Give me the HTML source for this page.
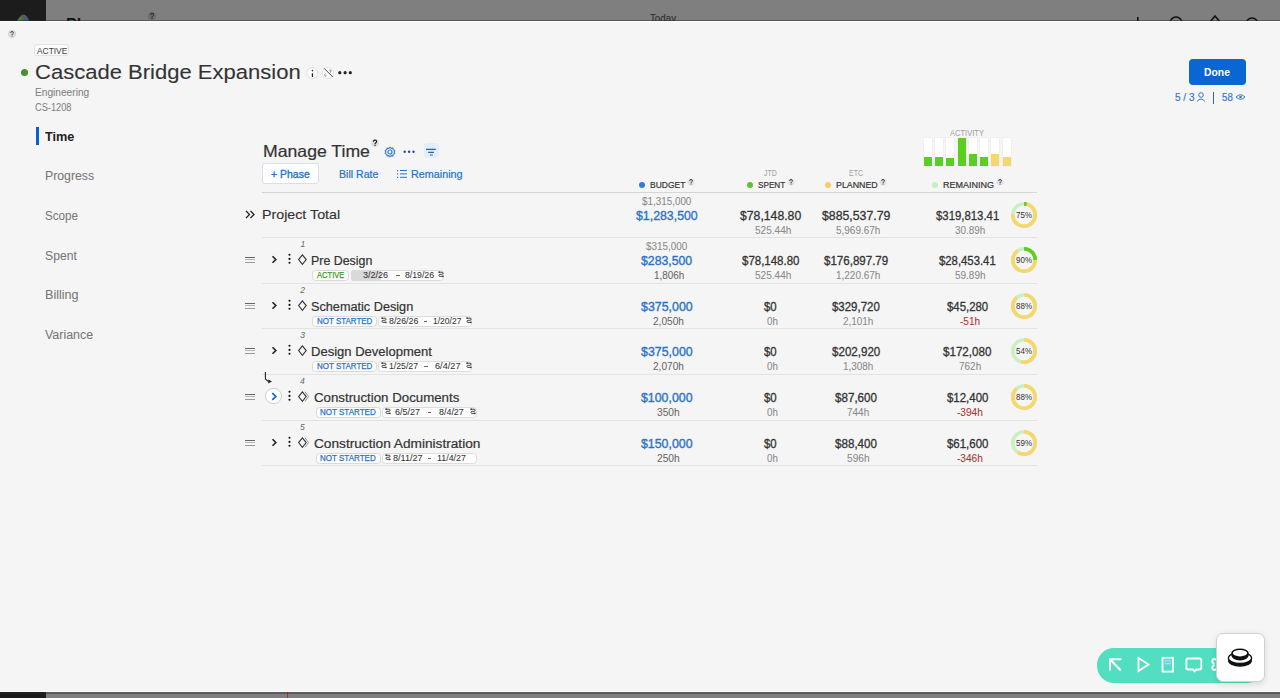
<!DOCTYPE html>
<html><head><meta charset="utf-8"><title>Manage Time</title>
<style>
html,body{margin:0;padding:0;}
body{width:1280px;height:698px;position:relative;overflow:hidden;background:#7f7f7f;font-family:"Liberation Sans",sans-serif;}
.t{position:absolute;white-space:nowrap;line-height:1;transform-origin:0 0;-webkit-text-stroke:0.2px currentColor;}
svg{overflow:visible}
</style></head><body>
<div style="position:absolute;left:0px;top:0px;width:46px;height:21px;background:#1c1c1c"></div><div style="position:absolute;left:46px;top:0px;width:1234px;height:21px;background:#7f7f7f"></div><div style="position:absolute;left:0px;top:692px;width:46px;height:6px;background:#1c1c1c"></div><div style="position:absolute;left:46px;top:692px;width:1234px;height:6px;background:#7f7f7f"></div><div style="position:absolute;left:287px;top:692px;width:1px;height:6px;background:#a33"></div><svg style="position:absolute;left:16px;top:13px;" width="14" height="8" viewBox="0 0 14 8"><path d="M1 8 Q5 0.5 7.5 1.5 Q10 0.5 13.5 8 Z" fill="#5a5a5a"/><path d="M1 8 Q3 4 6 4.5 L6 8Z" fill="#3f8a2a"/><path d="M8.5 5 Q11.5 5 13.5 8 H8.5Z" fill="#2a5f9a"/></svg><div class="t" style="left:66.00px;top:17.46px;font-size:16px;color:#111;-webkit-text-stroke:0px currentColor;font-weight:bold;">Pl</div><svg style="position:absolute;left:146px;top:10px;" width="12" height="12" viewBox="0 0 12 12"><circle cx="6" cy="6" r="4" fill="#6e6e6e"/><g transform="translate(6 6) scale(0.95)"><path d="M-1.55 -1.2 Q-1.55 -2.9 0.05 -2.9 Q1.65 -2.9 1.65 -1.45 Q1.65 -0.55 0.6 0.05 Q0.05 0.4 0.05 1.2" fill="none" stroke="#1a1a1a" stroke-width="1.05"/><circle cx="0.05" cy="2.45" r="0.62" fill="#1a1a1a"/></g></svg><div class="t" style="left:650.00px;top:14.04px;font-size:10px;color:#333;transform:scaleX(0.9745);">Today</div><svg style="position:absolute;left:1130px;top:14px;" width="130" height="7" viewBox="0 0 130 7"><rect x="7" y="3" width="1.6" height="5" fill="#111"/><circle cx="46" cy="9" r="6" fill="none" stroke="#111" stroke-width="1.5"/><path d="M80 8 L85 2 L90 8" fill="none" stroke="#111" stroke-width="1.5"/><circle cx="122" cy="10" r="6" fill="none" stroke="#111" stroke-width="1.5"/></svg><div style="position:absolute;left:0px;top:21px;width:1280px;height:671px;background:#f5f5f5"></div><div style="position:absolute;left:0px;top:20px;width:1280px;height:1px;background:rgba(40,40,40,0.45)"></div><div style="position:absolute;left:0px;top:21px;width:1280px;height:1px;background:#fdfdfd"></div><div style="position:absolute;left:0px;top:691px;width:1280px;height:1px;background:#fcfcfc"></div><div style="position:absolute;left:0px;top:692px;width:1280px;height:1.5px;background:rgba(40,40,40,0.4)"></div><svg style="position:absolute;left:6px;top:28px;" width="12" height="12" viewBox="0 0 12 12"><circle cx="6" cy="6" r="4.2" fill="#dadada"/><g transform="translate(6 6) scale(0.85)"><path d="M-1.55 -1.2 Q-1.55 -2.9 0.05 -2.9 Q1.65 -2.9 1.65 -1.45 Q1.65 -0.55 0.6 0.05 Q0.05 0.4 0.05 1.2" fill="none" stroke="#333" stroke-width="1.05"/><circle cx="0.05" cy="2.45" r="0.62" fill="#333"/></g></svg><div style="position:absolute;left:34px;top:44px;width:35px;height:12px;background:#fbfbfb;border:1px solid #e2e2e2;border-radius:3px;box-sizing:border-box"></div><div class="t" style="left:37.00px;top:46.55px;font-size:8.8px;color:#444;-webkit-text-stroke:0.05px currentColor;transform:scaleX(0.9533);">ACTIVE</div><div style="position:absolute;left:21px;top:69px;width:7px;height:7px;background:#4b8f2f;border-radius:50%"></div><div class="t" style="left:35.40px;top:61.55px;font-size:20.5px;color:#333;-webkit-text-stroke:0.1px currentColor;transform:scaleX(1.0744);">Cascade Bridge Expansion</div><svg style="position:absolute;left:306px;top:67px;" width="13" height="13" viewBox="0 0 13 13"><circle cx="6.4" cy="6" r="5.6" fill="#fbfbfb" stroke="#dcdcdc" stroke-width="0.9"/><rect x="5.8" y="6.3" width="1.3" height="3.7" fill="#222"/><circle cx="6.45" cy="3.6" r="0.8" fill="#222"/></svg><svg style="position:absolute;left:322px;top:67px;" width="13" height="13" viewBox="0 0 13 13"><circle cx="5.9" cy="6.1" r="5.6" fill="#fbfbfb" stroke="#e0e0e0" stroke-width="0.9"/><path d="M2.2 1.4 L10.9 10.1" stroke="#333" stroke-width="0.9"/><path d="M7.2 3.2 Q8.6 2.4 9 3.8 Q9.2 5 8 5.6 M4.6 8.8 Q3.4 9.8 2.8 8.6 Q2.4 7.4 3.6 6.6" fill="none" stroke="#777" stroke-width="0.9"/></svg><svg style="position:absolute;left:337px;top:70px;" width="16" height="6" viewBox="0 0 16 6"><circle cx="2.8" cy="2.7" r="1.6" fill="#222"/><circle cx="8.1" cy="2.7" r="1.6" fill="#222"/><circle cx="13.3" cy="2.7" r="1.6" fill="#222"/></svg><div class="t" style="left:34.90px;top:87.94px;font-size:10px;color:#808080;-webkit-text-stroke:0.05px currentColor;transform:scaleX(1.0156);">Engineering</div><div class="t" style="left:34.90px;top:102.63px;font-size:10px;color:#808080;-webkit-text-stroke:0.05px currentColor;transform:scaleX(0.9248);">CS-1208</div><div style="position:absolute;left:1189px;top:59px;width:57px;height:26px;background:#0a66d2;border-radius:4px"></div><div class="t" style="left:1204.30px;top:66.59px;font-size:11px;color:#fff;-webkit-text-stroke:0px currentColor;font-weight:bold;transform:scaleX(0.9418);">Done</div><div class="t" style="left:1175.20px;top:91.91px;font-size:10.5px;color:#3a78c8;transform:scaleX(0.9543);">5 / 3</div><svg style="position:absolute;left:1196px;top:92px;" width="10" height="10" viewBox="0 0 10 10"><circle cx="5" cy="3" r="2.3" fill="none" stroke="#3a78c8" stroke-width="1"/><path d="M1 9.5 Q5 4.5 9 9.5" fill="none" stroke="#3a78c8" stroke-width="1"/></svg><div style="position:absolute;left:1213px;top:92px;width:1.3px;height:12px;background:#2a68b8"></div><div class="t" style="left:1222.40px;top:91.91px;font-size:10.5px;color:#3a78c8;transform:scaleX(0.9250);">58</div><svg style="position:absolute;left:1235px;top:93px;" width="11" height="8" viewBox="0 0 11 8"><path d="M1 4 Q5.5 -0.5 10 4 Q5.5 8.5 1 4Z" fill="none" stroke="#3a78c8" stroke-width="1"/><circle cx="5.5" cy="4" r="1.3" fill="#3a78c8"/></svg><div style="position:absolute;left:36px;top:127px;width:3px;height:18px;background:#0a5fcc"></div><div class="t" style="left:44.50px;top:131.22px;font-size:12.5px;color:#222;-webkit-text-stroke:0px currentColor;font-weight:bold;transform:scaleX(1.0155);">Time</div><div class="t" style="left:45.40px;top:170.44px;font-size:12px;color:#777;-webkit-text-stroke:0.05px currentColor;transform:scaleX(1.0224);">Progress</div><div class="t" style="left:45.40px;top:210.04px;font-size:12px;color:#777;-webkit-text-stroke:0.05px currentColor;transform:scaleX(0.9700);">Scope</div><div class="t" style="left:45.40px;top:249.54px;font-size:12px;color:#777;-webkit-text-stroke:0.05px currentColor;transform:scaleX(1.0173);">Spent</div><div class="t" style="left:45.40px;top:289.04px;font-size:12px;color:#777;-webkit-text-stroke:0.05px currentColor;transform:scaleX(1.0495);">Billing</div><div class="t" style="left:45.40px;top:328.54px;font-size:12px;color:#777;-webkit-text-stroke:0.05px currentColor;transform:scaleX(1.0349);">Variance</div><div class="t" style="left:262.50px;top:142.73px;font-size:16.5px;color:#333;transform:scaleX(1.0693);">Manage Time</div><svg style="position:absolute;left:369.4px;top:137.2px;" width="12" height="12" viewBox="0 0 12 12"><circle cx="6" cy="6" r="4" fill="#dedede"/><g transform="translate(6 6) scale(1.0)"><path d="M-1.55 -1.2 Q-1.55 -2.9 0.05 -2.9 Q1.65 -2.9 1.65 -1.45 Q1.65 -0.55 0.6 0.05 Q0.05 0.4 0.05 1.2" fill="none" stroke="#111" stroke-width="1.05"/><circle cx="0.05" cy="2.45" r="0.62" fill="#111"/></g></svg><svg style="position:absolute;left:384px;top:146px;" width="12" height="12" viewBox="0 0 12 12"><circle cx="6" cy="6" r="2" fill="none" stroke="#3a7bd0" stroke-width="1.2"/><path d="M6 1.2 L7.2 2.3 L8.9 2.1 L9.3 3.7 L10.8 4.6 L10.1 6 L10.8 7.4 L9.3 8.3 L8.9 9.9 L7.2 9.7 L6 10.8 L4.8 9.7 L3.1 9.9 L2.7 8.3 L1.2 7.4 L1.9 6 L1.2 4.6 L2.7 3.7 L3.1 2.1 L4.8 2.3Z" fill="none" stroke="#3a7bd0" stroke-width="1.1"/></svg><svg style="position:absolute;left:403px;top:149px;" width="13" height="5" viewBox="0 0 13 5"><circle cx="1.7" cy="2.8" r="1.2" fill="#1a4f98"/><circle cx="6.1" cy="2.8" r="1.2" fill="#1a4f98"/><circle cx="10.5" cy="2.8" r="1.2" fill="#1a4f98"/></svg><div style="position:absolute;left:424px;top:143px;width:15px;height:15px;background:#e2eefa;border-radius:3px"></div><svg style="position:absolute;left:424px;top:143px;" width="15" height="15" viewBox="0 0 15 15"><path d="M2 6.4 H11.8 M4.2 9.4 H9.8 M6 12 H8.8" stroke="#2a5fa8" stroke-width="1.1"/></svg><div style="position:absolute;left:262px;top:163px;width:57px;height:21px;background:#fff;border:1px solid #d9dfe6;border-radius:3px;box-sizing:border-box"></div><div class="t" style="left:271.20px;top:168.69px;font-size:11px;color:#2a6fc2;-webkit-text-stroke:0.35px currentColor;transform:scaleX(0.9516);">+ Phase</div><div class="t" style="left:338.50px;top:168.59px;font-size:11px;color:#2a6fc2;transform:scaleX(0.9618);">Bill Rate</div><svg style="position:absolute;left:396px;top:169px;" width="12" height="10" viewBox="0 0 12 10"><g fill="#2a6fc2"><rect x="1" y="1" width="1.2" height="1.2"/><rect x="1" y="4.4" width="1.2" height="1.2"/><rect x="1" y="7.8" width="1.2" height="1.2"/><rect x="4" y="1" width="7" height="1"/><rect x="4" y="4.4" width="7" height="1"/><rect x="4" y="7.8" width="7" height="1"/></g></svg><div class="t" style="left:411.00px;top:168.69px;font-size:11px;color:#2a6fc2;transform:scaleX(0.9814);">Remaining</div><div style="position:absolute;left:262px;top:192px;width:775px;height:1px;background:#d6d6da"></div><div style="position:absolute;left:638.7px;top:181.6px;width:6px;height:6px;background:#2f7de0;border-radius:50%"></div><div class="t" style="left:649.70px;top:179.86px;font-size:9.5px;color:#333;transform:scaleX(0.8942);">BUDGET</div><svg style="position:absolute;left:684.8px;top:175.5px;" width="12" height="12" viewBox="0 0 12 12"><circle cx="6" cy="6" r="3.6" fill="#e2e2e2"/><g transform="translate(6 6) scale(0.85)"><path d="M-1.55 -1.2 Q-1.55 -2.9 0.05 -2.9 Q1.65 -2.9 1.65 -1.45 Q1.65 -0.55 0.6 0.05 Q0.05 0.4 0.05 1.2" fill="none" stroke="#222" stroke-width="1.05"/><circle cx="0.05" cy="2.45" r="0.62" fill="#222"/></g></svg><div style="position:absolute;left:746.5px;top:181.6px;width:6px;height:6px;background:#5cc62a;border-radius:50%"></div><div class="t" style="left:757.50px;top:179.86px;font-size:9.5px;color:#333;transform:scaleX(0.8588);">SPENT</div><svg style="position:absolute;left:784.7px;top:175.5px;" width="12" height="12" viewBox="0 0 12 12"><circle cx="6" cy="6" r="3.6" fill="#e2e2e2"/><g transform="translate(6 6) scale(0.85)"><path d="M-1.55 -1.2 Q-1.55 -2.9 0.05 -2.9 Q1.65 -2.9 1.65 -1.45 Q1.65 -0.55 0.6 0.05 Q0.05 0.4 0.05 1.2" fill="none" stroke="#222" stroke-width="1.05"/><circle cx="0.05" cy="2.45" r="0.62" fill="#222"/></g></svg><div style="position:absolute;left:824.5px;top:181.6px;width:6px;height:6px;background:#f5cf62;border-radius:50%"></div><div class="t" style="left:835.80px;top:179.86px;font-size:9.5px;color:#333;transform:scaleX(0.9292);">PLANNED</div><svg style="position:absolute;left:877.3px;top:175.5px;" width="12" height="12" viewBox="0 0 12 12"><circle cx="6" cy="6" r="3.6" fill="#e2e2e2"/><g transform="translate(6 6) scale(0.85)"><path d="M-1.55 -1.2 Q-1.55 -2.9 0.05 -2.9 Q1.65 -2.9 1.65 -1.45 Q1.65 -0.55 0.6 0.05 Q0.05 0.4 0.05 1.2" fill="none" stroke="#222" stroke-width="1.05"/><circle cx="0.05" cy="2.45" r="0.62" fill="#222"/></g></svg><div style="position:absolute;left:932px;top:181.6px;width:6px;height:6px;background:#c8efc0;border-radius:50%"></div><div class="t" style="left:943.40px;top:179.86px;font-size:9.5px;color:#333;transform:scaleX(0.9473);">REMAINING</div><svg style="position:absolute;left:994px;top:175.5px;" width="12" height="12" viewBox="0 0 12 12"><circle cx="6" cy="6" r="3.6" fill="#e2e2e2"/><g transform="translate(6 6) scale(0.85)"><path d="M-1.55 -1.2 Q-1.55 -2.9 0.05 -2.9 Q1.65 -2.9 1.65 -1.45 Q1.65 -0.55 0.6 0.05 Q0.05 0.4 0.05 1.2" fill="none" stroke="#222" stroke-width="1.05"/><circle cx="0.05" cy="2.45" r="0.62" fill="#222"/></g></svg><div class="t" style="left:764.00px;top:168.80px;font-size:8.5px;color:#a0a0a0;-webkit-text-stroke:0px currentColor;transform:scaleX(0.8151);">JTD</div><div class="t" style="left:848.60px;top:168.80px;font-size:8.5px;color:#a0a0a0;-webkit-text-stroke:0px currentColor;transform:scaleX(0.8294);">ETC</div><div class="t" style="left:950.20px;top:128.60px;font-size:8.5px;color:#a0a0a0;-webkit-text-stroke:0px currentColor;transform:scaleX(0.8887);">ACTIVITY</div><div style="position:absolute;left:924px;top:138px;width:8px;height:28px;background:#fff;box-shadow:0 0 0 0.5px #ececec"></div><div style="position:absolute;left:924px;top:157px;width:8px;height:9px;background:#5ccf1e"></div><div style="position:absolute;left:935px;top:138px;width:8px;height:28px;background:#fff;box-shadow:0 0 0 0.5px #ececec"></div><div style="position:absolute;left:935px;top:157px;width:8px;height:9px;background:#5ccf1e"></div><div style="position:absolute;left:946px;top:138px;width:8px;height:28px;background:#fff;box-shadow:0 0 0 0.5px #ececec"></div><div style="position:absolute;left:946px;top:158px;width:8px;height:8px;background:#5ccf1e"></div><div style="position:absolute;left:958px;top:138px;width:8px;height:28px;background:#fff;box-shadow:0 0 0 0.5px #ececec"></div><div style="position:absolute;left:958px;top:138px;width:8px;height:28px;background:#5ccf1e"></div><div style="position:absolute;left:969px;top:138px;width:8px;height:28px;background:#fff;box-shadow:0 0 0 0.5px #ececec"></div><div style="position:absolute;left:969px;top:154px;width:8px;height:12px;background:#5ccf1e"></div><div style="position:absolute;left:980px;top:138px;width:8px;height:28px;background:#fff;box-shadow:0 0 0 0.5px #ececec"></div><div style="position:absolute;left:980px;top:157px;width:8px;height:9px;background:#5ccf1e"></div><div style="position:absolute;left:991px;top:138px;width:8px;height:28px;background:#fff;box-shadow:0 0 0 0.5px #ececec"></div><div style="position:absolute;left:991px;top:154px;width:8px;height:12px;background:#f7d66a"></div><div style="position:absolute;left:1003px;top:138px;width:8px;height:28px;background:#fff;box-shadow:0 0 0 0.5px #ececec"></div><div style="position:absolute;left:1003px;top:157px;width:8px;height:9px;background:#f7d66a"></div><div style="position:absolute;left:262px;top:237px;width:775px;height:1px;background:#e3e3e3"></div><div style="position:absolute;left:262px;top:283px;width:775px;height:1px;background:#e3e3e3"></div><div style="position:absolute;left:262px;top:328px;width:775px;height:1px;background:#e3e3e3"></div><div style="position:absolute;left:262px;top:374px;width:775px;height:1px;background:#e3e3e3"></div><div style="position:absolute;left:262px;top:420px;width:775px;height:1px;background:#e3e3e3"></div><div style="position:absolute;left:262px;top:465px;width:775px;height:1px;background:#e3e3e3"></div><svg style="position:absolute;left:245px;top:210px;" width="11" height="9" viewBox="0 0 11 9"><path d="M1 1 L4.5 4.5 L1 8 M5.5 1 L9 4.5 L5.5 8" fill="none" stroke="#222" stroke-width="1.3"/></svg><div class="t" style="left:261.90px;top:208.10px;font-size:13px;color:#333;-webkit-text-stroke:0.12px currentColor;transform:scaleX(1.0955);">Project Total</div><div class="t" style="left:641.83px;top:196.63px;font-size:10px;color:#888;-webkit-text-stroke:0.05px currentColor;transform:scaleX(0.9860);">$1,315,000</div><div class="t" style="left:635.65px;top:209.10px;font-size:13px;color:#2a72c6;-webkit-text-stroke:0.35px currentColor;transform:scaleX(0.9483);">$1,283,500</div><div class="t" style="left:740.00px;top:209.00px;font-size:13px;color:#333;-webkit-text-stroke:0.3px currentColor;transform:scaleX(0.9406);">$78,148.80</div><div class="t" style="left:754.60px;top:225.53px;font-size:10px;color:#888;-webkit-text-stroke:0.05px currentColor;transform:scaleX(1.0069);">525.44h</div><div class="t" style="left:821.60px;top:209.00px;font-size:13px;color:#333;-webkit-text-stroke:0.3px currentColor;transform:scaleX(0.9461);">$885,537.79</div><div class="t" style="left:835.60px;top:225.53px;font-size:10px;color:#888;-webkit-text-stroke:0.05px currentColor;transform:scaleX(0.9980);">5,969.67h</div><div class="t" style="left:935.60px;top:208.80px;font-size:13px;color:#333;-webkit-text-stroke:0.3px currentColor;transform:scaleX(0.8742);">$319,813.41</div><div class="t" style="left:954.80px;top:225.53px;font-size:10px;color:#888;-webkit-text-stroke:0.05px currentColor;transform:scaleX(0.9873);">30.89h</div><svg style="position:absolute;left:1008.7px;top:199.8px;" width="30" height="30" viewBox="0 0 30 30"><circle cx="15" cy="15" r="11.2" fill="none" stroke="#c9f0c0" stroke-width="3.6"/><circle cx="15" cy="15" r="11.2" fill="none" stroke="#f7d66a" stroke-width="3.6" stroke-dasharray="52.78 70.37" transform="rotate(-90 15 15)"/><circle cx="15" cy="15" r="11.2" fill="none" stroke="#5ccf1e" stroke-width="3.6" stroke-dasharray="2.81 70.37" transform="rotate(-90 15 15)"/><text x="15" y="18" font-size="8.6" text-anchor="middle" fill="#333" font-family="Liberation Sans" textLength="16" lengthAdjust="spacingAndGlyphs">75%</text></svg><div class="t" style="left:300.60px;top:239.80px;font-size:8.5px;color:#666;-webkit-text-stroke:0px currentColor;font-style:italic;">1</div><div style="position:absolute;left:245px;top:257px;width:10px;height:1px;background:#666"></div><div style="position:absolute;left:245px;top:259px;width:10px;height:1.3px;background:#b5b5b5"></div><div style="position:absolute;left:245px;top:262px;width:10px;height:1px;background:#999"></div><svg style="position:absolute;left:270px;top:255px;" width="8" height="9" viewBox="0 0 8 9"><path d="M2.5 1.3 L5.8 4.5 L2.5 7.7" fill="none" stroke="#222" stroke-width="1.6"/></svg><svg style="position:absolute;left:287px;top:252px;" width="5" height="12" viewBox="0 0 5 12"><circle cx="2.5" cy="2.8" r="1.05" fill="#111"/><circle cx="2.5" cy="6.9" r="1.05" fill="#111"/><circle cx="2.5" cy="10.8" r="1.05" fill="#111"/></svg><svg style="position:absolute;left:297px;top:254.2px;" width="13" height="12" viewBox="0 0 13 12"><path d="M5.4 0.8 L9.2 5.6 L5.4 10.4 L1.6 5.6Z" fill="none" stroke="#333" stroke-width="1.1"/></svg><div class="t" style="left:311.20px;top:254.72px;font-size:12.5px;color:#333;transform:scaleX(0.9913);">Pre Design</div><div style="position:absolute;left:311.8px;top:269.8px;width:37.2px;height:11px;background:#fdfdfd;border:1px solid #d9d9d9;border-radius:3.5px;box-sizing:border-box"></div><div class="t" style="left:316.75px;top:270.75px;font-size:8.8px;color:#3d9a2a;-webkit-text-stroke:0.25px currentColor;transform:scaleX(0.8605);">ACTIVE</div><div style="position:absolute;left:350.7px;top:269.8px;width:93.5px;height:11px;background:#fdfdfd;border:1px solid #dcdcdc;border-radius:3.5px;box-sizing:border-box"></div><div style="position:absolute;left:350.7px;top:269.8px;width:30.1px;height:11px;background:#d9d9d9;border-radius:3px 0 0 3px"></div><div class="t" style="left:363.25px;top:270.97px;font-size:8.3px;color:#333;-webkit-text-stroke:0.05px currentColor;transform:scaleX(1.0900);">3/2/26</div><div style="position:absolute;left:395.7px;top:275.4px;width:4.0px;height:0.8px;background:#666"></div><div class="t" style="left:404.80px;top:270.97px;font-size:8.3px;color:#333;-webkit-text-stroke:0.05px currentColor;transform:scaleX(1.0474);">8/19/26</div><svg style="position:absolute;left:438.2px;top:271.3px;" width="6" height="7" viewBox="0 0 6 7"><path d="M1 1.2 H4 A1.05 1.05 0 0 1 4 3.3 H2 A1.05 1.05 0 0 0 2 5.4 H5" fill="none" stroke="#333" stroke-width="0.9"/><rect x="0.3" y="0.5" width="1.6" height="1.4" fill="#333"/><rect x="4" y="4.7" width="1.6" height="1.4" fill="#333"/></svg><div class="t" style="left:645.80px;top:242.34px;font-size:10px;color:#888;-webkit-text-stroke:0.05px currentColor;transform:scaleX(0.9878);">$315,000</div><div class="t" style="left:640.90px;top:254.82px;font-size:12.5px;color:#2a72c6;-webkit-text-stroke:0.35px currentColor;transform:scaleX(0.9820);">$283,500</div><div class="t" style="left:653.60px;top:271.04px;font-size:10px;color:#666;-webkit-text-stroke:0.05px currentColor;transform:scaleX(0.9873);">1,806h</div><div class="t" style="left:741.80px;top:255.14px;font-size:12px;color:#333;-webkit-text-stroke:0.3px currentColor;transform:scaleX(0.9557);">$78,148.80</div><div class="t" style="left:754.70px;top:271.04px;font-size:10px;color:#888;-webkit-text-stroke:0.05px currentColor;transform:scaleX(1.0069);">525.44h</div><div class="t" style="left:823.80px;top:255.14px;font-size:12px;color:#333;-webkit-text-stroke:0.3px currentColor;transform:scaleX(0.9621);">$176,897.79</div><div class="t" style="left:835.95px;top:271.04px;font-size:10px;color:#888;-webkit-text-stroke:0.05px currentColor;">1,220.67h</div><div class="t" style="left:939.15px;top:255.14px;font-size:12px;color:#333;-webkit-text-stroke:0.3px currentColor;transform:scaleX(0.9441);">$28,453.41</div><div class="t" style="left:954.75px;top:271.04px;font-size:10px;color:#888;-webkit-text-stroke:0.05px currentColor;transform:scaleX(0.9971);">59.89h</div><svg style="position:absolute;left:1008.7px;top:245.3px;" width="30" height="30" viewBox="0 0 30 30"><circle cx="15" cy="15" r="11.2" fill="none" stroke="#c9f0c0" stroke-width="3.6"/><circle cx="15" cy="15" r="11.2" fill="none" stroke="#f7d66a" stroke-width="3.6" stroke-dasharray="63.33 70.37" transform="rotate(-90 15 15)"/><circle cx="15" cy="15" r="11.2" fill="none" stroke="#5ccf1e" stroke-width="3.6" stroke-dasharray="17.59 70.37" transform="rotate(-90 15 15)"/><text x="15" y="18" font-size="8.6" text-anchor="middle" fill="#333" font-family="Liberation Sans" textLength="16" lengthAdjust="spacingAndGlyphs">90%</text></svg><div class="t" style="left:300.25px;top:285.80px;font-size:8.5px;color:#666;-webkit-text-stroke:0px currentColor;font-style:italic;">2</div><div style="position:absolute;left:245px;top:303px;width:10px;height:1px;background:#666"></div><div style="position:absolute;left:245px;top:305px;width:10px;height:1.3px;background:#b5b5b5"></div><div style="position:absolute;left:245px;top:308px;width:10px;height:1px;background:#999"></div><svg style="position:absolute;left:270px;top:301px;" width="8" height="9" viewBox="0 0 8 9"><path d="M2.5 1.3 L5.8 4.5 L2.5 7.7" fill="none" stroke="#222" stroke-width="1.6"/></svg><svg style="position:absolute;left:287px;top:298px;" width="5" height="12" viewBox="0 0 5 12"><circle cx="2.5" cy="2.8" r="1.05" fill="#111"/><circle cx="2.5" cy="6.9" r="1.05" fill="#111"/><circle cx="2.5" cy="10.8" r="1.05" fill="#111"/></svg><svg style="position:absolute;left:297px;top:300.2px;" width="13" height="12" viewBox="0 0 13 12"><path d="M5.4 0.8 L9.2 5.6 L5.4 10.4 L1.6 5.6Z" fill="none" stroke="#333" stroke-width="1.1"/></svg><div class="t" style="left:310.80px;top:300.72px;font-size:12.5px;color:#333;transform:scaleX(1.0145);">Schematic Design</div><div style="position:absolute;left:312.1px;top:315.8px;width:65.0px;height:11px;background:#fdfdfd;border:1px solid #d9d9d9;border-radius:3.5px;box-sizing:border-box"></div><div class="t" style="left:316.75px;top:316.75px;font-size:8.8px;color:#2a72c8;-webkit-text-stroke:0.25px currentColor;transform:scaleX(0.9057);">NOT STARTED</div><div style="position:absolute;left:378px;top:315.8px;width:93.7px;height:11px;background:#fdfdfd;border:1px solid #dcdcdc;border-radius:3.5px;box-sizing:border-box"></div><svg style="position:absolute;left:380.7px;top:317.3px;" width="6" height="7" viewBox="0 0 6 7"><path d="M1 1.2 H4 A1.05 1.05 0 0 1 4 3.3 H2 A1.05 1.05 0 0 0 2 5.4 H5" fill="none" stroke="#333" stroke-width="0.9"/><rect x="0.3" y="0.5" width="1.6" height="1.4" fill="#333"/><rect x="4" y="4.7" width="1.6" height="1.4" fill="#333"/></svg><div class="t" style="left:388.90px;top:316.97px;font-size:8.3px;color:#333;-webkit-text-stroke:0.05px currentColor;transform:scaleX(1.0582);">8/26/26</div><div style="position:absolute;left:423.7px;top:321.4px;width:3.8px;height:0.8px;background:#666"></div><div class="t" style="left:433.40px;top:316.97px;font-size:8.3px;color:#333;-webkit-text-stroke:0.05px currentColor;transform:scaleX(1.0293);">1/20/27</div><svg style="position:absolute;left:465.8px;top:317.3px;" width="6" height="7" viewBox="0 0 6 7"><path d="M1 1.2 H4 A1.05 1.05 0 0 1 4 3.3 H2 A1.05 1.05 0 0 0 2 5.4 H5" fill="none" stroke="#333" stroke-width="0.9"/><rect x="0.3" y="0.5" width="1.6" height="1.4" fill="#333"/><rect x="4" y="4.7" width="1.6" height="1.4" fill="#333"/></svg><div class="t" style="left:640.65px;top:300.82px;font-size:12.5px;color:#2a72c6;-webkit-text-stroke:0.35px currentColor;transform:scaleX(0.9916);">$375,000</div><div class="t" style="left:653.25px;top:317.04px;font-size:10px;color:#666;-webkit-text-stroke:0.05px currentColor;transform:scaleX(1.0101);">2,050h</div><div class="t" style="left:764.15px;top:301.14px;font-size:12px;color:#333;-webkit-text-stroke:0.3px currentColor;transform:scaleX(0.9517);">$0</div><div class="t" style="left:767.45px;top:317.04px;font-size:10px;color:#888;-webkit-text-stroke:0.05px currentColor;transform:scaleX(0.9802);">0h</div><div class="t" style="left:832.00px;top:301.14px;font-size:12px;color:#333;-webkit-text-stroke:0.3px currentColor;transform:scaleX(0.9550);">$329,720</div><div class="t" style="left:843.00px;top:317.04px;font-size:10px;color:#888;-webkit-text-stroke:0.05px currentColor;transform:scaleX(0.9938);">2,101h</div><div class="t" style="left:946.90px;top:301.14px;font-size:12px;color:#333;-webkit-text-stroke:0.3px currentColor;transform:scaleX(0.9497);">$45,280</div><div class="t" style="left:959.95px;top:317.04px;font-size:10px;color:#a83232;-webkit-text-stroke:0.05px currentColor;transform:scaleX(1.0045);">-51h</div><svg style="position:absolute;left:1008.7px;top:291.3px;" width="30" height="30" viewBox="0 0 30 30"><circle cx="15" cy="15" r="11.2" fill="none" stroke="#c9f0c0" stroke-width="3.6"/><circle cx="15" cy="15" r="11.2" fill="none" stroke="#f7d66a" stroke-width="3.6" stroke-dasharray="61.93 70.37" transform="rotate(-90 15 15)"/><text x="15" y="18" font-size="8.6" text-anchor="middle" fill="#333" font-family="Liberation Sans" textLength="16" lengthAdjust="spacingAndGlyphs">88%</text></svg><div class="t" style="left:300.20px;top:330.80px;font-size:8.5px;color:#666;-webkit-text-stroke:0px currentColor;font-style:italic;">3</div><div style="position:absolute;left:245px;top:348px;width:10px;height:1px;background:#666"></div><div style="position:absolute;left:245px;top:350px;width:10px;height:1.3px;background:#b5b5b5"></div><div style="position:absolute;left:245px;top:353px;width:10px;height:1px;background:#999"></div><svg style="position:absolute;left:270px;top:346px;" width="8" height="9" viewBox="0 0 8 9"><path d="M2.5 1.3 L5.8 4.5 L2.5 7.7" fill="none" stroke="#222" stroke-width="1.6"/></svg><svg style="position:absolute;left:287px;top:343px;" width="5" height="12" viewBox="0 0 5 12"><circle cx="2.5" cy="2.8" r="1.05" fill="#111"/><circle cx="2.5" cy="6.9" r="1.05" fill="#111"/><circle cx="2.5" cy="10.8" r="1.05" fill="#111"/></svg><svg style="position:absolute;left:297px;top:345.2px;" width="13" height="12" viewBox="0 0 13 12"><path d="M5.4 0.8 L9.2 5.6 L5.4 10.4 L1.6 5.6Z" fill="none" stroke="#333" stroke-width="1.1"/></svg><div class="t" style="left:310.80px;top:345.72px;font-size:12.5px;color:#333;transform:scaleX(1.0419);">Design Development</div><div style="position:absolute;left:312.1px;top:360.8px;width:65.0px;height:11px;background:#fdfdfd;border:1px solid #d9d9d9;border-radius:3.5px;box-sizing:border-box"></div><div class="t" style="left:316.75px;top:361.75px;font-size:8.8px;color:#2a72c8;-webkit-text-stroke:0.25px currentColor;transform:scaleX(0.9057);">NOT STARTED</div><div style="position:absolute;left:378px;top:360.8px;width:93.7px;height:11px;background:#fdfdfd;border:1px solid #dcdcdc;border-radius:3.5px;box-sizing:border-box"></div><svg style="position:absolute;left:380.7px;top:362.3px;" width="6" height="7" viewBox="0 0 6 7"><path d="M1 1.2 H4 A1.05 1.05 0 0 1 4 3.3 H2 A1.05 1.05 0 0 0 2 5.4 H5" fill="none" stroke="#333" stroke-width="0.9"/><rect x="0.3" y="0.5" width="1.6" height="1.4" fill="#333"/><rect x="4" y="4.7" width="1.6" height="1.4" fill="#333"/></svg><div class="t" style="left:389.20px;top:361.97px;font-size:8.3px;color:#333;-webkit-text-stroke:0.05px currentColor;transform:scaleX(1.0474);">1/25/27</div><div style="position:absolute;left:424.2px;top:366.4px;width:4.1px;height:0.8px;background:#666"></div><div class="t" style="left:434.80px;top:361.97px;font-size:8.3px;color:#333;-webkit-text-stroke:0.05px currentColor;transform:scaleX(1.1051);">6/4/27</div><svg style="position:absolute;left:465.8px;top:362.3px;" width="6" height="7" viewBox="0 0 6 7"><path d="M1 1.2 H4 A1.05 1.05 0 0 1 4 3.3 H2 A1.05 1.05 0 0 0 2 5.4 H5" fill="none" stroke="#333" stroke-width="0.9"/><rect x="0.3" y="0.5" width="1.6" height="1.4" fill="#333"/><rect x="4" y="4.7" width="1.6" height="1.4" fill="#333"/></svg><div class="t" style="left:640.65px;top:345.82px;font-size:12.5px;color:#2a72c6;-webkit-text-stroke:0.35px currentColor;transform:scaleX(0.9916);">$375,000</div><div class="t" style="left:653.25px;top:362.04px;font-size:10px;color:#666;-webkit-text-stroke:0.05px currentColor;transform:scaleX(1.0101);">2,070h</div><div class="t" style="left:764.15px;top:346.14px;font-size:12px;color:#333;-webkit-text-stroke:0.3px currentColor;transform:scaleX(0.9517);">$0</div><div class="t" style="left:767.45px;top:362.04px;font-size:10px;color:#888;-webkit-text-stroke:0.05px currentColor;transform:scaleX(0.9802);">0h</div><div class="t" style="left:831.75px;top:346.14px;font-size:12px;color:#333;-webkit-text-stroke:0.3px currentColor;transform:scaleX(0.9650);">$202,920</div><div class="t" style="left:843.10px;top:362.04px;font-size:10px;color:#888;-webkit-text-stroke:0.05px currentColor;transform:scaleX(0.9873);">1,308h</div><div class="t" style="left:943.30px;top:346.14px;font-size:12px;color:#333;-webkit-text-stroke:0.3px currentColor;transform:scaleX(0.9670);">$172,080</div><div class="t" style="left:958.90px;top:362.04px;font-size:10px;color:#888;-webkit-text-stroke:0.05px currentColor;transform:scaleX(0.9978);">762h</div><svg style="position:absolute;left:1008.7px;top:336.3px;" width="30" height="30" viewBox="0 0 30 30"><circle cx="15" cy="15" r="11.2" fill="none" stroke="#c9f0c0" stroke-width="3.6"/><circle cx="15" cy="15" r="11.2" fill="none" stroke="#f7d66a" stroke-width="3.6" stroke-dasharray="38.00 70.37" transform="rotate(-90 15 15)"/><text x="15" y="18" font-size="8.6" text-anchor="middle" fill="#333" font-family="Liberation Sans" textLength="16" lengthAdjust="spacingAndGlyphs">54%</text></svg><div class="t" style="left:300.10px;top:376.80px;font-size:8.5px;color:#666;-webkit-text-stroke:0px currentColor;font-style:italic;">4</div><div style="position:absolute;left:245px;top:394px;width:10px;height:1px;background:#666"></div><div style="position:absolute;left:245px;top:396px;width:10px;height:1.3px;background:#b5b5b5"></div><div style="position:absolute;left:245px;top:399px;width:10px;height:1px;background:#999"></div><div style="position:absolute;left:265.3px;top:388.1px;width:16.4px;height:16.4px;background:#fff;border:1px solid #cfcfcf;border-radius:50%;box-sizing:border-box"></div><svg style="position:absolute;left:270px;top:392px;" width="8" height="9" viewBox="0 0 8 9"><path d="M2.3 1.2 L5.8 4.5 L2.3 7.8" fill="none" stroke="#1060d0" stroke-width="1.7"/></svg><svg style="position:absolute;left:287px;top:389px;" width="5" height="12" viewBox="0 0 5 12"><circle cx="2.5" cy="2.8" r="1.05" fill="#111"/><circle cx="2.5" cy="6.9" r="1.05" fill="#111"/><circle cx="2.5" cy="10.8" r="1.05" fill="#111"/></svg><svg style="position:absolute;left:297px;top:391.2px;" width="13" height="12" viewBox="0 0 13 12"><path d="M5.4 0.8 L9.2 5.6 L5.4 10.4 L1.6 5.6Z" fill="none" stroke="#333" stroke-width="1.1"/><path d="M8 0.8 L11.6 5.6 L8 10.4" fill="none" stroke="#888" stroke-width="0.9"/></svg><div class="t" style="left:313.90px;top:391.72px;font-size:12.5px;color:#333;transform:scaleX(1.0616);">Construction Documents</div><div style="position:absolute;left:315.7px;top:406.8px;width:65.3px;height:11px;background:#fdfdfd;border:1px solid #d9d9d9;border-radius:3.5px;box-sizing:border-box"></div><div class="t" style="left:320.30px;top:407.75px;font-size:8.8px;color:#2a72c8;-webkit-text-stroke:0.25px currentColor;transform:scaleX(0.9114);">NOT STARTED</div><div style="position:absolute;left:382px;top:406.8px;width:94.8px;height:11px;background:#fdfdfd;border:1px solid #dcdcdc;border-radius:3.5px;box-sizing:border-box"></div><svg style="position:absolute;left:384.5px;top:408.3px;" width="6" height="7" viewBox="0 0 6 7"><path d="M1 1.2 H4 A1.05 1.05 0 0 1 4 3.3 H2 A1.05 1.05 0 0 0 2 5.4 H5" fill="none" stroke="#333" stroke-width="0.9"/><rect x="0.3" y="0.5" width="1.6" height="1.4" fill="#333"/><rect x="4" y="4.7" width="1.6" height="1.4" fill="#333"/></svg><div class="t" style="left:394.80px;top:407.97px;font-size:8.3px;color:#333;-webkit-text-stroke:0.05px currentColor;transform:scaleX(1.0878);">6/5/27</div><div style="position:absolute;left:427.7px;top:412.4px;width:3.6px;height:0.8px;background:#666"></div><div class="t" style="left:439.00px;top:407.97px;font-size:8.3px;color:#333;-webkit-text-stroke:0.05px currentColor;transform:scaleX(1.0748);">8/4/27</div><svg style="position:absolute;left:470px;top:408.3px;" width="6" height="7" viewBox="0 0 6 7"><path d="M1 1.2 H4 A1.05 1.05 0 0 1 4 3.3 H2 A1.05 1.05 0 0 0 2 5.4 H5" fill="none" stroke="#333" stroke-width="0.9"/><rect x="0.3" y="0.5" width="1.6" height="1.4" fill="#333"/><rect x="4" y="4.7" width="1.6" height="1.4" fill="#333"/></svg><div class="t" style="left:640.75px;top:391.82px;font-size:12.5px;color:#2a72c6;-webkit-text-stroke:0.35px currentColor;transform:scaleX(0.9878);">$100,000</div><div class="t" style="left:657.35px;top:408.04px;font-size:10px;color:#666;-webkit-text-stroke:0.05px currentColor;transform:scaleX(1.0202);">350h</div><div class="t" style="left:764.15px;top:392.14px;font-size:12px;color:#333;-webkit-text-stroke:0.3px currentColor;transform:scaleX(0.9517);">$0</div><div class="t" style="left:767.45px;top:408.04px;font-size:10px;color:#888;-webkit-text-stroke:0.05px currentColor;transform:scaleX(0.9802);">0h</div><div class="t" style="left:834.90px;top:392.14px;font-size:12px;color:#333;-webkit-text-stroke:0.3px currentColor;transform:scaleX(0.9682);">$87,600</div><div class="t" style="left:847.10px;top:408.04px;font-size:10px;color:#888;-webkit-text-stroke:0.05px currentColor;transform:scaleX(0.9978);">744h</div><div class="t" style="left:946.80px;top:392.14px;font-size:12px;color:#333;-webkit-text-stroke:0.3px currentColor;transform:scaleX(0.9544);">$12,400</div><div class="t" style="left:957.10px;top:408.04px;font-size:10px;color:#a83232;-webkit-text-stroke:0.05px currentColor;transform:scaleX(1.0086);">-394h</div><svg style="position:absolute;left:1008.7px;top:382.3px;" width="30" height="30" viewBox="0 0 30 30"><circle cx="15" cy="15" r="11.2" fill="none" stroke="#c9f0c0" stroke-width="3.6"/><circle cx="15" cy="15" r="11.2" fill="none" stroke="#f7d66a" stroke-width="3.6" stroke-dasharray="61.93 70.37" transform="rotate(-90 15 15)"/><text x="15" y="18" font-size="8.6" text-anchor="middle" fill="#333" font-family="Liberation Sans" textLength="16" lengthAdjust="spacingAndGlyphs">88%</text></svg><div class="t" style="left:300.10px;top:422.80px;font-size:8.5px;color:#666;-webkit-text-stroke:0px currentColor;font-style:italic;">5</div><div style="position:absolute;left:245px;top:440px;width:10px;height:1px;background:#666"></div><div style="position:absolute;left:245px;top:442px;width:10px;height:1.3px;background:#b5b5b5"></div><div style="position:absolute;left:245px;top:445px;width:10px;height:1px;background:#999"></div><svg style="position:absolute;left:270px;top:438px;" width="8" height="9" viewBox="0 0 8 9"><path d="M2.5 1.3 L5.8 4.5 L2.5 7.7" fill="none" stroke="#222" stroke-width="1.6"/></svg><svg style="position:absolute;left:287px;top:435px;" width="5" height="12" viewBox="0 0 5 12"><circle cx="2.5" cy="2.8" r="1.05" fill="#111"/><circle cx="2.5" cy="6.9" r="1.05" fill="#111"/><circle cx="2.5" cy="10.8" r="1.05" fill="#111"/></svg><svg style="position:absolute;left:297px;top:437.2px;" width="13" height="12" viewBox="0 0 13 12"><path d="M5.4 0.8 L9.2 5.6 L5.4 10.4 L1.6 5.6Z" fill="none" stroke="#333" stroke-width="1.1"/><path d="M8 0.8 L11.6 5.6 L8 10.4" fill="none" stroke="#888" stroke-width="0.9"/></svg><div class="t" style="left:313.90px;top:437.72px;font-size:12.5px;color:#333;transform:scaleX(1.0937);">Construction Administration</div><div style="position:absolute;left:315.7px;top:452.8px;width:65.3px;height:11px;background:#fdfdfd;border:1px solid #d9d9d9;border-radius:3.5px;box-sizing:border-box"></div><div class="t" style="left:320.30px;top:453.75px;font-size:8.8px;color:#2a72c8;-webkit-text-stroke:0.25px currentColor;transform:scaleX(0.9114);">NOT STARTED</div><div style="position:absolute;left:382px;top:452.8px;width:94.8px;height:11px;background:#fdfdfd;border:1px solid #dcdcdc;border-radius:3.5px;box-sizing:border-box"></div><svg style="position:absolute;left:384.5px;top:454.3px;" width="6" height="7" viewBox="0 0 6 7"><path d="M1 1.2 H4 A1.05 1.05 0 0 1 4 3.3 H2 A1.05 1.05 0 0 0 2 5.4 H5" fill="none" stroke="#333" stroke-width="0.9"/><rect x="0.3" y="0.5" width="1.6" height="1.4" fill="#333"/><rect x="4" y="4.7" width="1.6" height="1.4" fill="#333"/></svg><div class="t" style="left:392.80px;top:453.97px;font-size:8.3px;color:#333;-webkit-text-stroke:0.05px currentColor;transform:scaleX(1.0933);">8/11/27</div><div style="position:absolute;left:427.7px;top:458.4px;width:3.6px;height:0.8px;background:#666"></div><div class="t" style="left:436.90px;top:453.97px;font-size:8.3px;color:#333;-webkit-text-stroke:0.05px currentColor;transform:scaleX(1.0674);">11/4/27</div><div class="t" style="left:640.75px;top:437.82px;font-size:12.5px;color:#2a72c6;-webkit-text-stroke:0.35px currentColor;transform:scaleX(0.9878);">$150,000</div><div class="t" style="left:657.35px;top:454.04px;font-size:10px;color:#666;-webkit-text-stroke:0.05px currentColor;transform:scaleX(1.0202);">250h</div><div class="t" style="left:764.15px;top:438.14px;font-size:12px;color:#333;-webkit-text-stroke:0.3px currentColor;transform:scaleX(0.9517);">$0</div><div class="t" style="left:767.45px;top:454.04px;font-size:10px;color:#888;-webkit-text-stroke:0.05px currentColor;transform:scaleX(0.9802);">0h</div><div class="t" style="left:834.90px;top:438.14px;font-size:12px;color:#333;-webkit-text-stroke:0.3px currentColor;transform:scaleX(0.9682);">$88,400</div><div class="t" style="left:846.90px;top:454.04px;font-size:10px;color:#888;-webkit-text-stroke:0.05px currentColor;transform:scaleX(1.0157);">596h</div><div class="t" style="left:946.80px;top:438.14px;font-size:12px;color:#333;-webkit-text-stroke:0.3px currentColor;transform:scaleX(0.9544);">$61,600</div><div class="t" style="left:957.10px;top:454.04px;font-size:10px;color:#a83232;-webkit-text-stroke:0.05px currentColor;transform:scaleX(1.0086);">-346h</div><svg style="position:absolute;left:1008.7px;top:428.3px;" width="30" height="30" viewBox="0 0 30 30"><circle cx="15" cy="15" r="11.2" fill="none" stroke="#c9f0c0" stroke-width="3.6"/><circle cx="15" cy="15" r="11.2" fill="none" stroke="#f7d66a" stroke-width="3.6" stroke-dasharray="41.52 70.37" transform="rotate(-90 15 15)"/><text x="15" y="18" font-size="8.6" text-anchor="middle" fill="#333" font-family="Liberation Sans" textLength="16" lengthAdjust="spacingAndGlyphs">59%</text></svg><svg style="position:absolute;left:263px;top:371px;" width="11" height="14" viewBox="0 0 11 14"><path d="M2.4 1 V8 L5.5 10.6" fill="none" stroke="#222" stroke-width="1.1"/><path d="M5.2 8.6 L9 10.5 L5.2 12.6Z" fill="#222"/></svg><div style="position:absolute;left:1097px;top:648px;width:167px;height:34.5px;background:#52dfc1;border-radius:17px"></div><svg style="position:absolute;left:1105px;top:655px;" width="110" height="20" viewBox="0 0 110 20"><g fill="none" stroke="#fff" stroke-width="1.8"><path d="M5 15.5 V4.2 H16.5 M5 4.2 L15.8 15.5" stroke-width="2"/><path d="M33.5 3 L43.5 9.5 L33.5 16Z"/><rect x="57.5" y="2.8" width="10.5" height="13.8"/><path d="M83.2 3.5 H94.5 Q96.3 3.5 96.3 5.3 V12.7 Q96.3 14.5 94.5 14.5 H91.5 L89.5 16.5 L88 14.5 H83.2 Q81.4 14.5 81.4 12.7 V5.3 Q81.4 3.5 83.2 3.5Z"/><path d="M109.5 9.5 Q106.5 7.5 107.5 5 Q109 3 111 5 M109.5 9.5 Q106.5 11.5 107.5 14 Q109 16 111 14"/></g><rect x="59.5" y="5" width="6.5" height="1.8" fill="#b8c8ff"/><path d="M59.5 8.8 H66" stroke="#d8e2ff" stroke-width="1"/></svg><div style="position:absolute;left:1216px;top:633px;width:49px;height:49px;background:#fff;border:1px solid #d0d0d0;border-radius:7px;box-sizing:border-box;box-shadow:0 2px 6px rgba(0,0,0,0.12)"></div><svg style="position:absolute;left:1227px;top:647px;" width="26" height="22" viewBox="0 0 26 22"><ellipse cx="13" cy="13.6" rx="12" ry="6.2" fill="#111"/><ellipse cx="13" cy="11" rx="11.6" ry="5.4" fill="#fff" stroke="#111" stroke-width="1.3"/><ellipse cx="13" cy="8.6" rx="8.6" ry="4.8" fill="#111"/><ellipse cx="13" cy="6.2" rx="8" ry="4" fill="#fff" stroke="#111" stroke-width="1.6"/></svg>
</body></html>
